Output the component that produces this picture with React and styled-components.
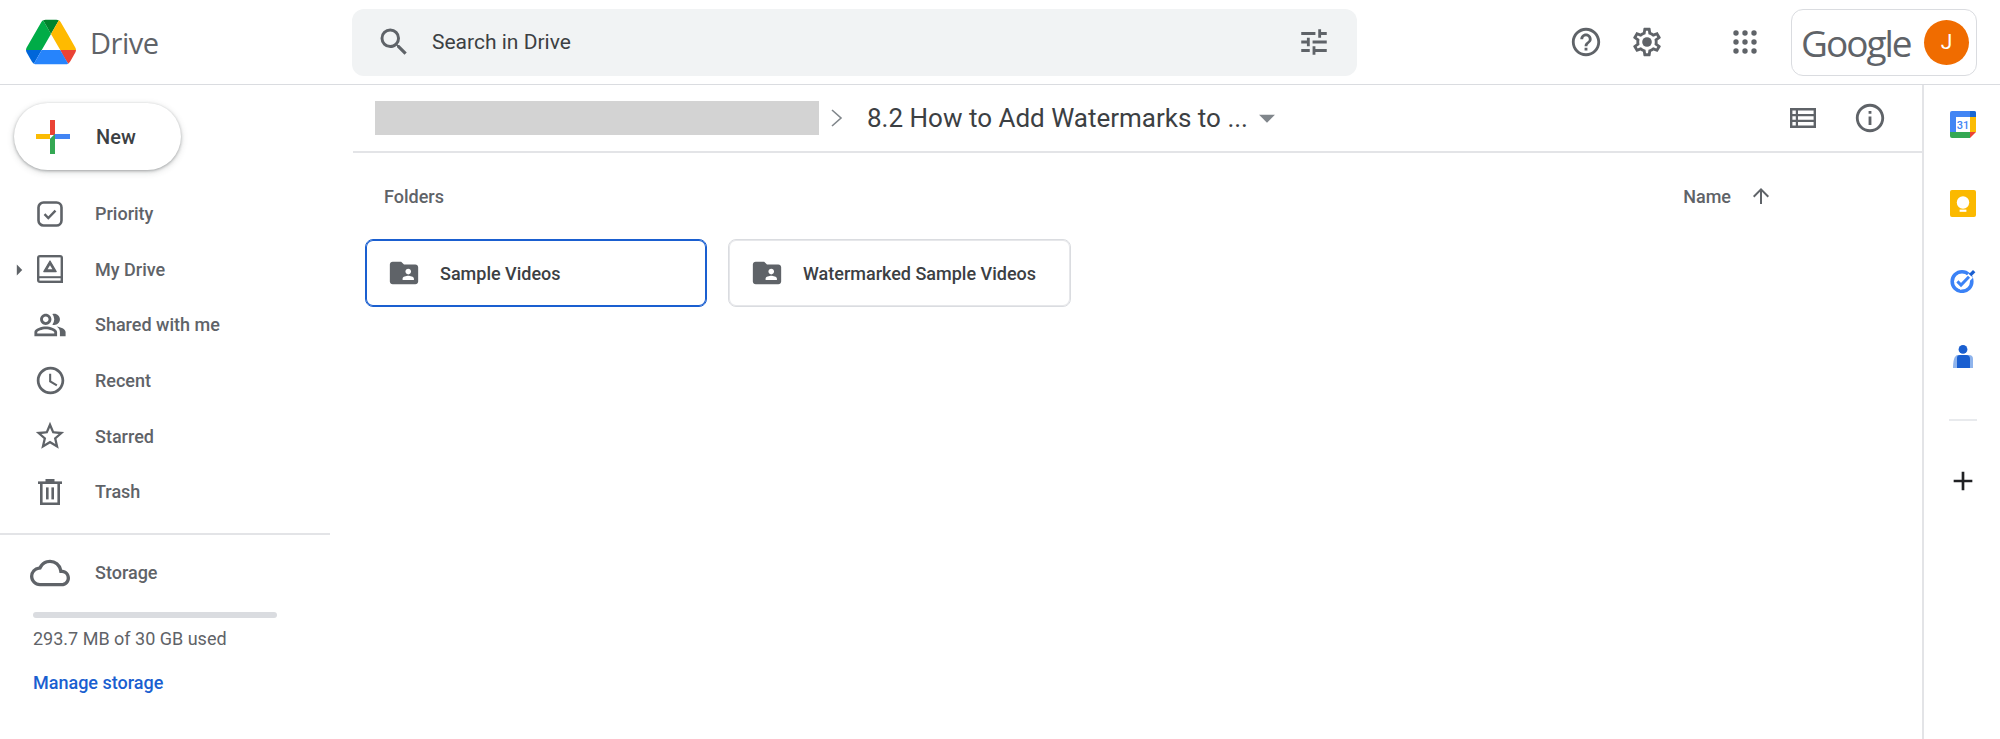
import React from "react";
import styled, { createGlobalStyle } from "styled-components";
import {
  MdSearch,
  MdTune,
  MdHelpOutline,
  MdInfoOutline,
  MdArrowUpward,
  MdAdd,
  MdFolderShared,
  MdOutlinePeopleAlt,
  MdAccessTime,
  MdStarBorder,
  MdOutlineCloud,
  MdArrowDropDown,
  MdArrowRight,
} from "react-icons/md";

const GlobalStyle = createGlobalStyle`
  html, body {
    margin: 0;
    height: 100%;
    background: #fff;
    font-family: Roboto, "Liberation Sans", Arial, sans-serif;
    overflow: hidden;
  }
  * { box-sizing: border-box; }
`;

function DriveLogo() {
  return (
    <svg width="50" height="46" viewBox="0 0 87.3 78">
      <path d="m6.6 66.85 3.85 6.65c.8 1.4 1.95 2.5 3.3 3.3l13.75-23.8h-27.5c0 1.55.4 3.1 1.2 4.5z" fill="#0066da" />
      <path d="m43.65 25-13.75-23.8c-1.35.8-2.5 1.9-3.3 3.3l-25.4 44a9.06 9.06 0 0 0 -1.2 4.5h27.5z" fill="#00ac47" />
      <path d="m73.55 76.8c1.35-.8 2.5-1.9 3.3-3.3l1.6-2.75 7.65-13.25c.8-1.4 1.2-2.95 1.2-4.5h-27.502l5.852 11.5z" fill="#ea4335" />
      <path d="m43.65 25 13.75-23.8c-1.35-.8-2.9-1.2-4.5-1.2h-18.5c-1.6 0-3.15.45-4.5 1.2z" fill="#00832d" />
      <path d="m59.8 53h-32.3l-13.75 23.8c1.35.8 2.9 1.2 4.5 1.2h50.8c1.6 0 3.15-.45 4.5-1.2z" fill="#2684fc" />
      <path d="m73.4 26.5-12.7-22c-.8-1.4-1.95-2.5-3.3-3.3l-13.75 23.8 16.15 28h27.45c0-1.55-.4-3.1-1.2-4.5z" fill="#ffba00" />
    </svg>
  );
}

function GearIcon() {
  return (
    <svg width="34" height="34" viewBox="0 0 24 24" fill="#5f6368">
      <path d="M19.43 12.98c.04-.32.07-.64.07-.98 0-.34-.03-.66-.07-.98l2.11-1.65c.19-.15.24-.42.12-.64l-2-3.46c-.09-.16-.26-.25-.44-.25-.06 0-.12.01-.17.03l-2.49 1c-.52-.4-1.08-.73-1.69-.98l-.38-2.65C14.46 2.18 14.25 2 14 2h-4c-.25 0-.46.18-.49.42l-.38 2.65c-.61.25-1.17.59-1.69.98l-2.49-1c-.06-.02-.12-.03-.18-.03-.17 0-.34.09-.43.25l-2 3.46c-.13.22-.07.49.12.64l2.11 1.65c-.04.32-.07.65-.07.98 0 .33.03.66.07.98l-2.11 1.65c-.19.15-.24.42-.12.64l2 3.46c.09.16.26.25.44.25.06 0 .12-.01.17-.03l2.49-1c.52.4 1.08.73 1.69.98l.38 2.65c.03.24.24.42.49.42h4c.25 0 .46-.18.49-.42l.38-2.65c.61-.25 1.17-.59 1.69-.98l2.49 1c.06.02.12.03.18.03.17 0 .34-.09.43-.25l2-3.46c.12-.22.07-.49-.12-.64l-2.11-1.65zm-1.98-1.71c.04.31.05.52.05.73 0 .21-.02.43-.05.73l-.14 1.13.89.7 1.08.84-.7 1.21-1.27-.51-1.04-.42-.9.68c-.43.32-.84.56-1.25.73l-1.06.43-.16 1.13-.2 1.35h-1.4l-.19-1.35-.16-1.13-1.06-.43c-.43-.18-.83-.41-1.23-.71l-.91-.7-1.06.43-1.27.51-.7-1.21 1.08-.84.89-.7-.14-1.13c-.03-.31-.05-.54-.05-.74s.02-.43.05-.73l.14-1.13-.89-.7-1.08-.84.7-1.21 1.27.51 1.04.42.9-.68c.43-.32.84-.56 1.25-.73l1.06-.43.16-1.13.2-1.35h1.39l.19 1.35.16 1.13 1.06.43c.43.18.83.41 1.23.71l.91.7 1.06-.43 1.27-.51.7 1.21-1.07.85-.89.7.14 1.13z" />
      <circle cx="12" cy="12" r="3.4" />
    </svg>
  );
}

function AppsIcon() {
  const dots = [3, 12, 21];
  return (
    <svg width="24" height="24" viewBox="0 0 24 24" fill="#5f6368">
      {dots.map((y) => dots.map((x) => <circle key={`${x}-${y}`} cx={x} cy={y} r="2.7" />))}
    </svg>
  );
}

function ColorPlus() {
  return (
    <svg width="34" height="34" viewBox="0 0 34 34">
      <rect x="14" y="0" width="5" height="15" fill="#ea4335" />
      <rect x="0" y="14" width="14" height="5" fill="#fbbc04" />
      <path d="M19 14h15v5H14z" fill="#4285f4" />
      <path d="M14 19l5-5v20h-5z" fill="#34a853" />
      <rect x="14" y="19" width="5" height="15" fill="#34a853" />
    </svg>
  );
}

function PriorityIcon() {
  return (
    <svg width="26" height="26" viewBox="0 0 26 26" fill="none" stroke="#5f6368">
      <rect x="1.5" y="1.5" width="23" height="23" rx="5" strokeWidth="2.6" />
      <path d="M7.5 13.2l3.8 3.8 7.2-7.4" strokeWidth="2.4" />
    </svg>
  );
}

function MyDriveIcon() {
  return (
    <svg width="26" height="28" viewBox="0 0 26 28">
      <path d="M3 0h20a3 3 0 0 1 3 3v25H3a3 3 0 0 1-3-3V3a3 3 0 0 1 3-3z" fill="#5f6368" />
      <rect x="2.4" y="2.4" width="21.2" height="18.8" fill="#fff" />
      <rect x="2.4" y="23.2" width="21.2" height="2.4" fill="#fff" />
      <path d="M13 6l6.2 10.6H6.8z" fill="#5f6368" stroke="#5f6368" strokeWidth="1.2" strokeLinejoin="round" />
      <path d="M10.6 14.2h4.8L13 10.2z" fill="#fff" />
    </svg>
  );
}

function TrashIcon() {
  return (
    <svg width="24" height="26" viewBox="0 0 24 26" fill="#5f6368">
      <rect x="0" y="2.4" width="24" height="2.6" />
      <rect x="7.5" y="0" width="9" height="3" />
      <path d="M2 4h20v22H2zm2.6 1v18.4h14.8V5z" fillRule="evenodd" />
      <rect x="8" y="8.4" width="2.6" height="12" />
      <rect x="13.4" y="8.4" width="2.6" height="12" />
    </svg>
  );
}

function TableIcon() {
  return (
    <svg width="26" height="20" viewBox="0 0 26 20" fill="#5f6368">
      <path
        d="M0 0h26v20H0zM2.4 2.4v3.6h3.4V2.4zm5.6 0v3.6h15.6V2.4zM2.4 8.2v3.6h3.4V8.2zm5.6 0v3.6h15.6V8.2zM2.4 14v3.6h3.4V14zm5.6 0v3.6h15.6V14z"
        fillRule="evenodd"
      />
    </svg>
  );
}

function CalendarIcon() {
  return (
    <svg width="26" height="27" viewBox="0 0 26 27">
      <path d="M2 0h22a2 2 0 0 1 2 2v4H0V2a2 2 0 0 1 2-2z" fill="#4285f4" />
      <rect x="0" y="6" width="6" height="15" fill="#4285f4" />
      <rect x="20" y="6" width="6" height="15" fill="#fbbc04" />
      <path d="M0 21h20v6H2a2 2 0 0 1-2-2z" fill="#34a853" />
      <path d="M20 21h6l-6 6z" fill="#ea4335" />
      <path d="M20 0h4a2 2 0 0 1 2 2v4h-6z" fill="#1967d2" />
      <rect x="6" y="6" width="14" height="15" fill="#fff" />
      <text x="13" y="18" textAnchor="middle" fontFamily="Roboto, sans-serif" fontSize="11" fontWeight="500" fill="#4285f4">31</text>
    </svg>
  );
}

function KeepIcon() {
  return (
    <svg width="26" height="27" viewBox="0 0 26 27">
      <rect width="26" height="27" rx="2" fill="#fbb900" />
      <circle cx="13" cy="12.5" r="6.2" fill="#fff" />
      <rect x="9.6" y="19.6" width="6.8" height="2.2" fill="#fff" />
    </svg>
  );
}

function TasksIcon() {
  return (
    <svg width="26" height="24" viewBox="0 0 26 24">
      <circle cx="12" cy="12.5" r="9.8" fill="none" stroke="#3b82f6" strokeWidth="3.6" />
      <path d="M6.6 12.6l4.2 4.2 10-10.2" fill="none" stroke="#fff" strokeWidth="6" />
      <path d="M7.4 12.4l3.6 3.6 8-8.2" fill="none" stroke="#3b82f6" strokeWidth="3" />
      <path d="M19 5l4-4 2.4 2.2-4 4z" fill="#1a5fd0" />
    </svg>
  );
}

function ContactsIcon() {
  return (
    <svg width="20" height="23" viewBox="0 0 20 23">
      <path d="M5 10h11a4 4 0 0 1 4 4v9H0c0-6 1-13 5-13z" fill="#8fb4ec" />
      <circle cx="10" cy="4.4" r="4.4" fill="#1a5fd0" />
      <path d="M7 10h6a4 4 0 0 1 4 4v9H4v-10a3 3 0 0 1 3-3z" fill="#1a5fd0" />
    </svg>
  );
}

const NAV_ITEMS = [
  { label: "Priority", icon: <PriorityIcon /> },
  { label: "My Drive", icon: <MyDriveIcon />, expandable: true },
  { label: "Shared with me", icon: <MdOutlinePeopleAlt size={34} /> },
  { label: "Recent", icon: <MdAccessTime size={33} /> },
  { label: "Starred", icon: <MdStarBorder size={34} /> },
  { label: "Trash", icon: <TrashIcon /> },
];

const FOLDERS = [
  { name: "Sample Videos", width: 342, selected: true },
  { name: "Watermarked Sample Videos", width: 343 },
];

export default function App() {
  return (
    <Page>
      <GlobalStyle />
      <Header>
        <Brand>
          <DriveLogo />
          <BrandName>Drive</BrandName>
        </Brand>
        <SearchBar>
          <MdSearch size={36} color="#5f6368" />
          <SearchText>Search in Drive</SearchText>
          <MdTune size={34} color="#5f6368" />
        </SearchBar>
        <HeaderTools>
          <MdHelpOutline size={34} color="#5f6368" />
          <GearSlot>
            <GearIcon />
          </GearSlot>
          <AppsSlot>
            <AppsIcon />
          </AppsSlot>
          <AccountBox>
            <GoogleMark>Google</GoogleMark>
            <Avatar>J</Avatar>
          </AccountBox>
        </HeaderTools>
      </Header>
      <Body>
        <Sidebar>
          <NewButton>
            <ColorPlus />
            <NewLabel>New</NewLabel>
          </NewButton>
          <NavList>
            {NAV_ITEMS.map((item) => (
              <NavRow key={item.label}>
                {item.expandable && (
                  <Caret>
                    <MdArrowRight size={26} />
                  </Caret>
                )}
                <NavIcon>{item.icon}</NavIcon>
                <NavLabel>{item.label}</NavLabel>
              </NavRow>
            ))}
          </NavList>
          <SideDivider />
          <StorageRow>
            <NavIcon>
              <MdOutlineCloud size={40} />
            </NavIcon>
            <NavLabel>Storage</NavLabel>
          </StorageRow>
          <StorageBar />
          <StorageUsed>293.7 MB of 30 GB used</StorageUsed>
          <ManageLink>Manage storage</ManageLink>
        </Sidebar>
        <Main>
          <Toolbar>
            <RedactedCrumb />
            <CrumbChevron viewBox="0 0 13 18" width="13" height="18">
              <path d="M2 1l9 8-9 8" fill="none" stroke="#80868b" strokeWidth="1.6" />
            </CrumbChevron>
            <CrumbTitle>8.2 How to Add Watermarks to ...</CrumbTitle>
            <CrumbDrop>
              <MdArrowDropDown size={38} />
            </CrumbDrop>
            <ToolbarActions>
              <TableIcon />
              <MdInfoOutline size={34} color="#5f6368" />
            </ToolbarActions>
          </Toolbar>
          <ListHead>
            <SectionTitle>Folders</SectionTitle>
            <SortControl>
              <SortName>Name</SortName>
              <MdArrowUpward size={24} color="#5f6368" />
            </SortControl>
          </ListHead>
          <FolderGrid>
            {FOLDERS.map((folder) => (
              <FolderCard key={folder.name} $width={folder.width} $selected={folder.selected}>
                <MdFolderShared size={34} color="#5f6368" />
                <FolderName>{folder.name}</FolderName>
              </FolderCard>
            ))}
          </FolderGrid>
        </Main>
        <AddOns>
          <AddOnSlot $height={27}>
            <CalendarIcon />
          </AddOnSlot>
          <AddOnSlot $height={27}>
            <KeepIcon />
          </AddOnSlot>
          <AddOnSlot $height={24}>
            <TasksIcon />
          </AddOnSlot>
          <AddOnSlot $height={23}>
            <ContactsIcon />
          </AddOnSlot>
          <AddOnDivider />
          <AddOnPlus>
            <MdAdd size={32} color="#202124" />
          </AddOnPlus>
        </AddOns>
      </Body>
    </Page>
  );
}

const Page = styled.div`
  display: flex;
  flex-direction: column;
  width: 2000px;
  height: 739px;
  background: #fff;
`;

const Header = styled.header`
  display: flex;
  align-items: center;
  flex: 0 0 85px;
  border-bottom: 1px solid #dadce0;
`;

const Brand = styled.div`
  display: flex;
  align-items: center;
  gap: 14px;
  width: 352px;
  padding-left: 26px;
`;

const BrandName = styled.span`
  font-family: "Open Sans", sans-serif;
  font-size: 29px;
  color: #5f6368;
  letter-spacing: -0.5px;
`;

const SearchBar = styled.div`
  display: flex;
  align-items: center;
  width: 1005px;
  height: 67px;
  padding: 0 26px 0 24px;
  border-radius: 12px;
  background: #f1f3f4;
`;

const SearchText = styled.span`
  flex: 1;
  margin-left: 20px;
  font-size: 21px;
  color: #3c4043;
`;

const HeaderTools = styled.div`
  display: flex;
  align-items: center;
  margin-left: auto;
  padding-right: 23px;
`;

const GearSlot = styled.span`
  display: flex;
  margin-left: 27px;
`;

const AppsSlot = styled.span`
  display: flex;
  margin: 0 34px 0 69px;
`;

const AccountBox = styled.div`
  display: flex;
  align-items: center;
  justify-content: space-between;
  width: 186px;
  height: 67px;
  padding: 0 7px 0 9px;
  border: 1px solid #dadce0;
  border-radius: 12px;
`;

const GoogleMark = styled.span`
  font-family: "Open Sans", sans-serif;
  font-size: 37px;
  letter-spacing: -2px;
  color: #5f6368;
`;

const Avatar = styled.span`
  display: flex;
  align-items: center;
  justify-content: center;
  width: 45px;
  height: 45px;
  border-radius: 50%;
  background: #f06c00;
  color: #fff;
  font-size: 21px;
`;

const Body = styled.div`
  display: flex;
  flex: 1;
  min-height: 0;
`;

const Sidebar = styled.aside`
  flex: 0 0 353px;
  padding-top: 18px;
`;

const NewButton = styled.div`
  display: flex;
  align-items: center;
  width: 167px;
  height: 67px;
  margin-left: 14px;
  padding-left: 22px;
  border-radius: 34px;
  background: #fff;
  box-shadow: 0 1px 3px rgba(60, 64, 67, 0.4), 0 2px 6px 1px rgba(60, 64, 67, 0.15);
`;

const NewLabel = styled.span`
  margin-left: 26px;
  font-size: 20px;
  font-weight: 500;
  color: #3c4043;
`;

const NavList = styled.nav`
  display: flex;
  flex-direction: column;
  margin-top: 16px;
  margin-bottom: 13px;
`;

const NavRow = styled.div`
  position: relative;
  display: flex;
  align-items: center;
  height: 55.6px;
`;

const Caret = styled.span`
  position: absolute;
  left: 6px;
  top: 15px;
  display: flex;
  color: #5f6368;
`;

const NavIcon = styled.span`
  display: flex;
  align-items: center;
  justify-content: center;
  flex: 0 0 44px;
  margin-left: 28px;
  margin-right: 23px;
  color: #5f6368;
`;

const NavLabel = styled.span`
  font-size: 18px;
  font-weight: 500;
  color: #5f6368;
`;

const SideDivider = styled.div`
  width: 330px;
  height: 2px;
  background: #e3e4e7;
`;

const StorageRow = styled.div`
  display: flex;
  align-items: center;
  height: 40px;
  margin-top: 18px;
`;

const StorageBar = styled.div`
  width: 244px;
  height: 6px;
  margin: 19px 0 0 33px;
  border-radius: 3px;
  background: #dadce0;
`;

const StorageUsed = styled.div`
  margin: 10px 0 0 33px;
  font-size: 18px;
  color: #5f6368;
`;

const ManageLink = styled.div`
  margin: 23px 0 0 33px;
  font-size: 18px;
  font-weight: 500;
  color: #1a5fd0;
`;

const Main = styled.main`
  flex: 1;
  min-width: 0;
`;

const Toolbar = styled.div`
  display: flex;
  align-items: center;
  height: 68px;
  padding: 0 35px 0 22px;
  border-bottom: 2px solid #e3e4e7;
`;

const RedactedCrumb = styled.div`
  width: 444px;
  height: 34px;
  background: #d3d3d3;
`;

const CrumbChevron = styled.svg`
  margin: 0 24px 0 11px;
`;

const CrumbTitle = styled.span`
  font-size: 26px;
  color: #3c4043;
`;

const CrumbDrop = styled.span`
  display: flex;
  margin-left: 0;
  color: #80868b;
`;

const ToolbarActions = styled.div`
  display: flex;
  align-items: center;
  gap: 37px;
  margin-left: auto;
`;

const ListHead = styled.div`
  display: flex;
  align-items: center;
  justify-content: space-between;
  padding: 31px 149px 0 31px;
`;

const SectionTitle = styled.span`
  font-size: 18px;
  font-weight: 500;
  color: #5f6368;
`;

const SortControl = styled.div`
  display: flex;
  align-items: center;
  gap: 18px;
`;

const SortName = styled.span`
  font-size: 18px;
  font-weight: 500;
  color: #5f6368;
`;

const FolderGrid = styled.div`
  display: flex;
  gap: 21px;
  margin-top: 31px;
  padding-left: 12px;
`;

const FolderCard = styled.div`
  display: flex;
  align-items: center;
  width: ${(props) => props.$width}px;
  height: 68px;
  padding-left: 21px;
  border: 1px solid ${(props) => (props.$selected ? "#1a5fd0" : "#dadce0")};
  box-shadow: ${(props) => (props.$selected ? "inset 0 0 0 1px #1a5fd0" : "inset 0 0 0 1px #e6e7ea")};
  border-radius: 8px;
`;

const FolderName = styled.span`
  margin-left: 19px;
  font-size: 18px;
  font-weight: 500;
  color: #3c4043;
`;

const AddOns = styled.aside`
  display: flex;
  flex-direction: column;
  align-items: center;
  flex: 0 0 78px;
  padding: 26px 0 0 2px;
  border-left: 2px solid #e3e4e7;
`;

const AddOnSlot = styled.div`
  display: flex;
  align-items: center;
  justify-content: center;
  height: ${(props) => props.$height}px;
  margin-bottom: 52px;
`;

const AddOnDivider = styled.div`
  width: 28px;
  height: 2px;
  margin-top: -1px;
  background: #e8eaed;
`;

const AddOnPlus = styled.div`
  display: flex;
  margin-top: 44px;
`;
